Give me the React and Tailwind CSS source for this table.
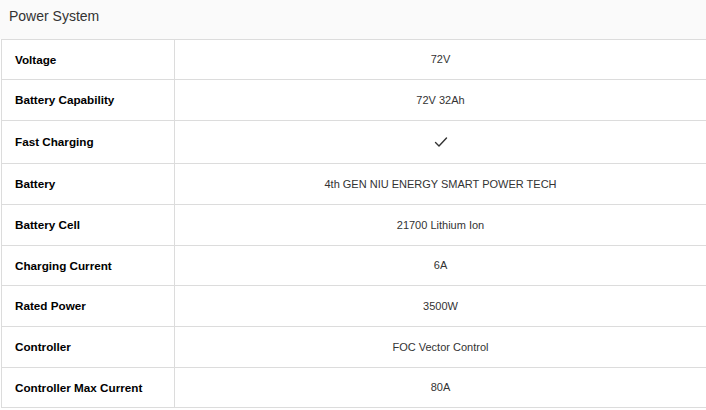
const rows = [
  { label: "Voltage", value: "72V", h: "h-[40px]" },
  { label: "Battery Capability", value: "72V 32Ah", h: "h-[41px]" },
  { label: "Fast Charging", check: true, h: "h-[43px]" },
  { label: "Battery", value: "4th GEN NIU ENERGY SMART POWER TECH", h: "h-[41px]" },
  { label: "Battery Cell", value: "21700 Lithium Ion", h: "h-[41px]" },
  { label: "Charging Current", value: "6A", h: "h-[40px]" },
  { label: "Rated Power", value: "3500W", h: "h-[41px]" },
  { label: "Controller", value: "FOC Vector Control", h: "h-[41px]" },
  { label: "Controller Max Current", value: "80A", h: "h-[40px]" },
];

function Check() {
  return (
    <svg width="14" height="12" viewBox="0 0 14 12" fill="none">
      <path d="M1.5 6.5 L5 10 L12.5 2" stroke="#333" strokeWidth="1.4" strokeLinecap="round" strokeLinejoin="round" />
    </svg>
  );
}

export default function App() {
  return (
    <div className="w-[706px] h-[410px] overflow-hidden bg-white font-['Liberation_Sans',sans-serif] text-[#222]">
      <div className="h-[39px] bg-[#fafafa] pl-[9px] pt-[6px] text-[14px] text-[#333]">Power System</div>
      <div className="ml-px w-[720px] border-t border-l border-[#dcdcdc]">
        {rows.map((r) => (
          <div key={r.label} className={`flex border-b border-[#dcdcdc] ${r.h}`}>
            <div className="w-[173px] shrink-0 border-r border-[#dcdcdc] flex items-center pl-[13px] text-[11.7px] font-bold text-black">
              {r.label}
            </div>
            <div className="w-[531px] flex items-center justify-center text-[11px] text-[#333]">
              {r.check ? <Check /> : r.value}
            </div>
          </div>
        ))}
      </div>
    </div>
  );
}
